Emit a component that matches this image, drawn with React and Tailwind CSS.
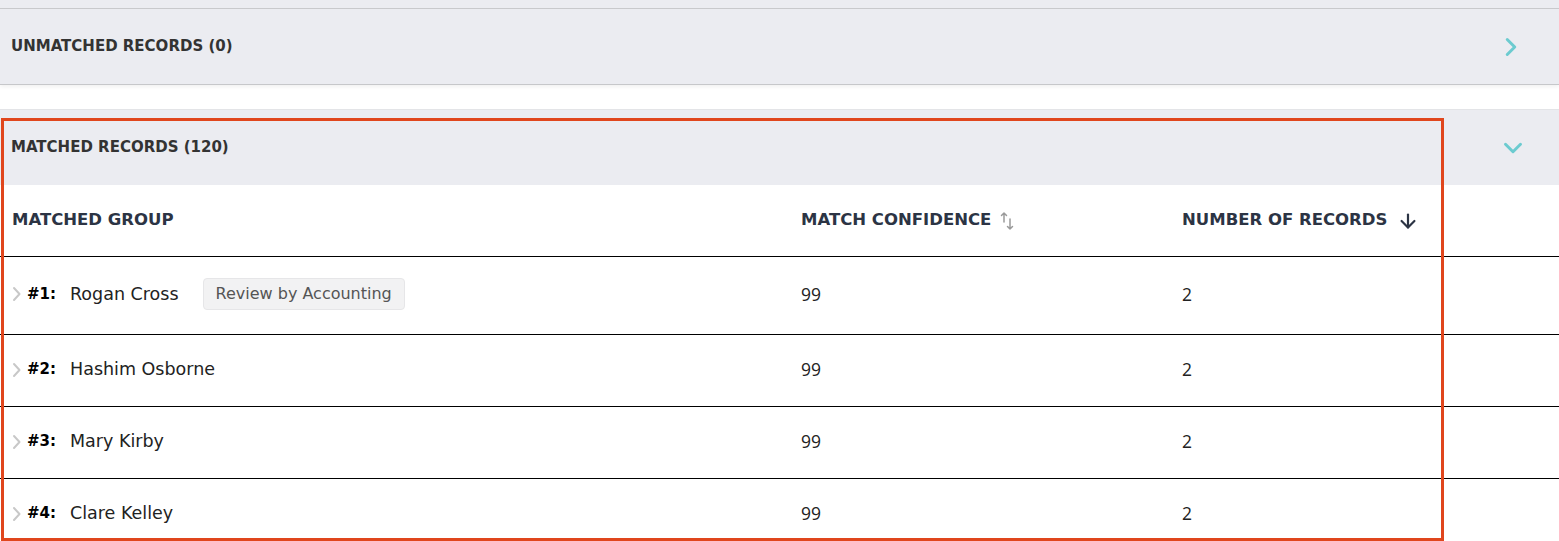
import { ChevronRight, ChevronDown, ArrowDown } from "lucide-react";

const rows = [
  { n: 1, name: "Rogan Cross", badge: "Review by Accounting", confidence: 99, records: 2 },
  { n: 2, name: "Hashim Osborne", confidence: 99, records: 2 },
  { n: 3, name: "Mary Kirby", confidence: 99, records: 2 },
  { n: 4, name: "Clare Kelley", confidence: 99, records: 2 },
];

function SortIcon() {
  return (
    <svg width="16" height="20" viewBox="0 0 16 20" fill="none" stroke="#9a9a9a" strokeWidth="1.5" strokeLinecap="round" strokeLinejoin="round">
      <path d="M5 11V2M2.5 4.5L5 2l2.5 2.5" />
      <path d="M11 8v10M8.5 15.5L11 18l2.5-2.5" />
    </svg>
  );
}

function RowChevron() {
  return (
    <svg width="9" height="16" viewBox="0 0 9 16" fill="none" stroke="#c8c8c8" strokeWidth="2" strokeLinecap="round" strokeLinejoin="round">
      <path d="M2 2l5.5 6L2 14" />
    </svg>
  );
}

function App() {
  return (
    <div className="relative w-[1559px] h-[541px] overflow-hidden bg-white font-['DejaVu_Sans',sans-serif]">
      <div className="h-[9px] bg-[#ebecf1] border-b border-[#c9cacd]" />
      <div className="h-[76px] flex items-center justify-between pl-[11px] pr-[33px] bg-[#ebecf1] border-b border-[#c6c7ca] shadow-[0_2px_4px_rgba(0,0,0,0.06)]">
        <span className="text-[15px] font-bold text-[#333333]">UNMATCHED RECORDS (0)</span>
        <ChevronRight size={30} strokeWidth={2.4} className="text-[#6ccbd0]" />
      </div>

      <div className="mt-[24px] border-t border-[#e3e4e7]">
        <div className="h-[75px] flex items-center justify-between pl-[11px] pr-[31px] bg-[#ebecf1]">
          <span className="text-[15px] font-bold text-[#333333]">MATCHED RECORDS (120)</span>
          <ChevronDown size={30} strokeWidth={2.4} className="text-[#6ccbd0]" />
        </div>

        <div className="h-[72px] flex items-center pl-[12px] border-b border-black text-[16.5px] font-semibold text-[#2c3444]">
          <div className="w-[789px]">MATCHED GROUP</div>
          <div className="w-[381px] flex items-center gap-[8px]">
            <span>MATCH CONFIDENCE</span>
            <SortIcon />
          </div>
          <div className="flex items-center gap-[10px] font-bold">
            <span>NUMBER OF RECORDS</span>
            <ArrowDown size={22} strokeWidth={2.4} className="text-[#2c3444]" />
          </div>
        </div>

        {rows.map((r) => (
          <div
            key={r.n}
            className={`flex items-center pl-[12px] border-b border-black text-[17.5px] text-[#222222] ${r.badge ? "h-[78px] pb-[3px]" : "h-[72px] pb-[2px]"}`}
          >
            <div className="w-[789px] flex items-center">
              <RowChevron />
              <span className="ml-[6px] text-[15px] font-bold text-black w-[43px]">#{r.n}:</span>
              <span>{r.name}</span>
              {r.badge && (
                <span className="ml-[24px] px-[12px] h-[32px] flex items-center rounded-[4px] bg-[#f2f2f3] border border-[#e6e6e8] text-[16px] text-[#555555]">
                  {r.badge}
                </span>
              )}
            </div>
            <div className="w-[381px] font-['Open_Sans',sans-serif] text-[17.5px]">{r.confidence}</div>
            <div className="font-['Open_Sans',sans-serif] text-[17.5px]">{r.records}</div>
          </div>
        ))}
      </div>

      <div className="absolute left-[1px] top-[118px] w-[1443px] h-[423px] border-[3px] border-[#e0461d] pointer-events-none" />
    </div>
  );
}

export default App;
